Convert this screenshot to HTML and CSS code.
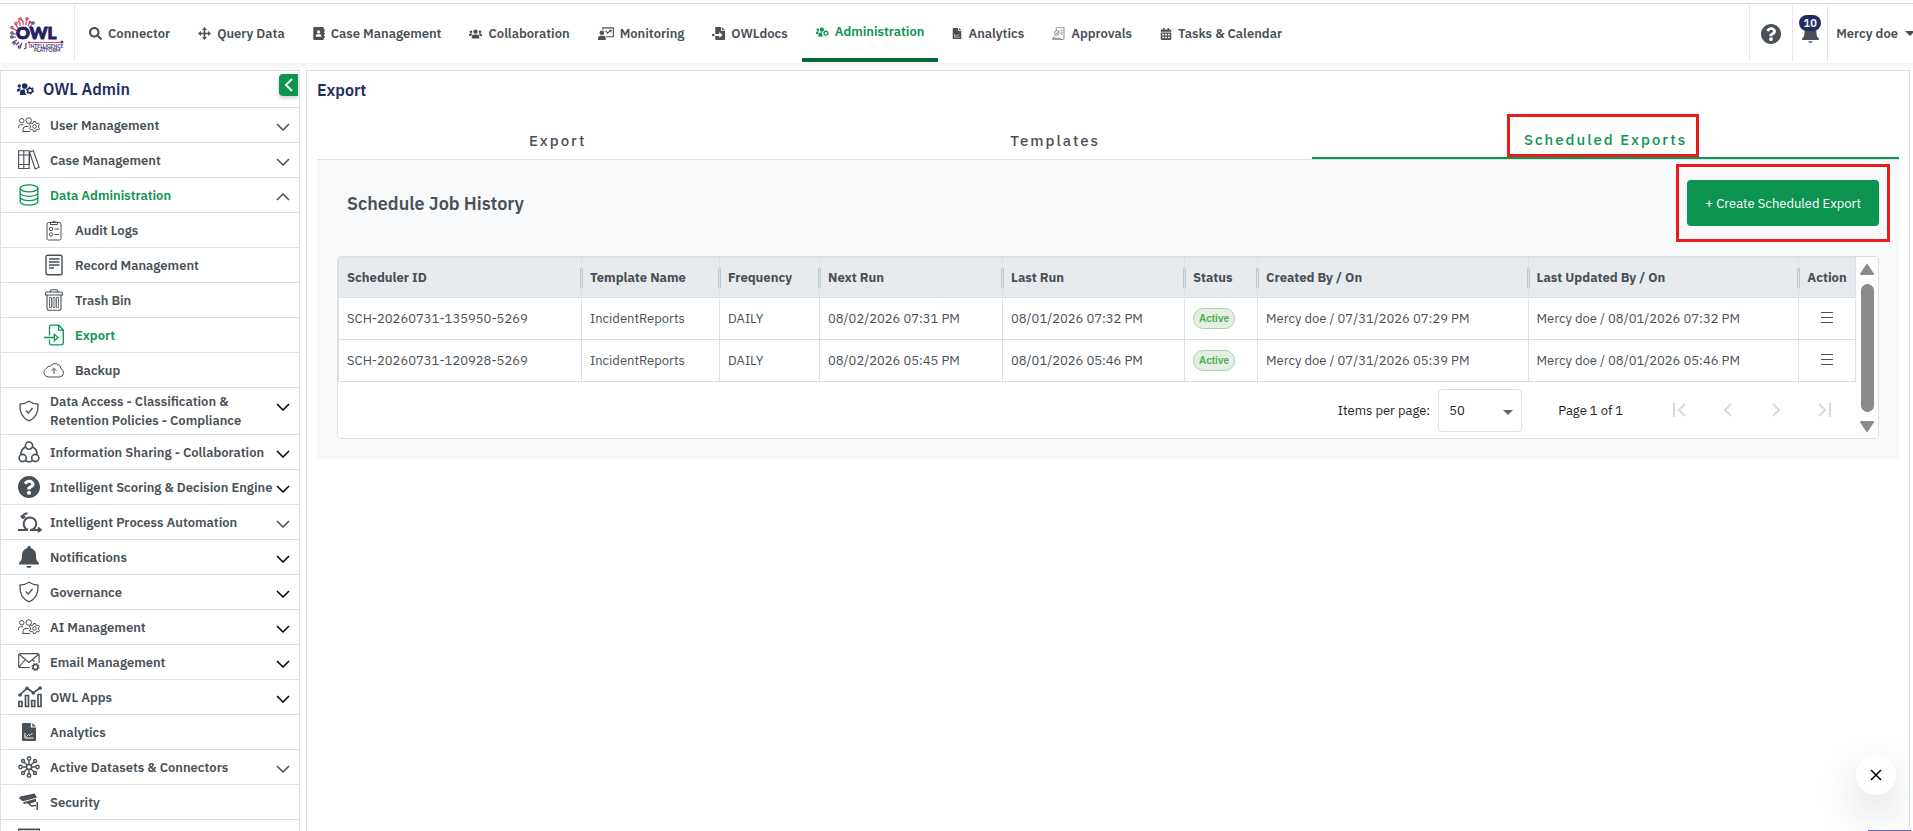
FILE: index.html
```html
<!DOCTYPE html>
<html lang="en">
<head>
	<meta charset="UTF-8">
	<title>OWL Admin - Export</title>
	<meta name="viewport" content="width=device-width,initial-scale=1">
	<link rel="stylesheet" href="styles.css">
</head>
<body>
	<svg class="sprite" aria-hidden="true">
		<symbol id="i-search" viewBox="0 0 512 512"><path fill="currentColor" d="M505 442.7L405.3 343c-4.5-4.5-10.6-7-17-7H372c27.6-35.3 44-79.7 44-128C416 93.1 322.9 0 208 0S0 93.1 0 208s93.1 208 208 208c48.3 0 92.7-16.4 128-44v16.3c0 6.4 2.5 12.5 7 17l99.7 99.7c9.4 9.4 24.6 9.4 33.9 0l28.3-28.3c9.4-9.4 9.4-24.6.1-34zM208 336c-70.7 0-128-57.2-128-128 0-70.7 57.2-128 128-128 70.7 0 128 57.2 128 128 0 70.7-57.2 128-128 128z"/></symbol>
		<symbol id="i-move" viewBox="0 0 16 16"><path fill="currentColor" d="M8 0l3 3.600H9V7h3.400V5L16 8l-3.600 3V9H9v3.400h2L8 16l-3-3.600h2V9H3.600v2L0 8l3.600-3v2H7V3.600H5z"/></symbol>
		<symbol id="i-book" viewBox="0 0 14 16"><path fill="currentColor" fill-rule="evenodd" d="M1.500 0h10A1.500 1.500 0 0 1 13 1.500V3h1v2.500h-1V7h1v2.500h-1V11h1v2.500h-1v1a1.500 1.500 0 0 1-1.500 1.500h-10A1.500 1.500 0 0 1 0 14.500v-13A1.500 1.500 0 0 1 1.500 0zM6.500 4a2 2 0 1 0 0 4 2 2 0 0 0 0-4zM3 12h7v-1c0-1.400-1.200-2.200-2.400-2.200H5.400C4.200 8.800 3 9.600 3 11z"/></symbol>
		<symbol id="i-users" viewBox="0 0 20 14"><g fill="currentColor"><circle cx="3" cy="3.500" r="2"/><circle cx="17" cy="3.500" r="2"/><circle cx="10" cy="3.500" r="3.300"/><path d="M0 10V8.500A2.300 2.300 0 0 1 2.300 6.300H4.500l.8.500A5 5 0 0 0 3.400 10zM20 10V8.500a2.300 2.300 0 0 0-2.300-2.200h-2.200l-.8.500a5 5 0 0 1 1.900 3.200zM4.200 14v-2.500A3.800 3.800 0 0 1 8 7.700h4a3.800 3.800 0 0 1 3.800 3.800V14z"/></g></symbol>
		<symbol id="i-users-cog" viewBox="0 0 20 14"><g fill="currentColor"><circle cx="2.700" cy="3.500" r="2"/><circle cx="9" cy="3.500" r="3.300"/><path d="M0 10V8.500a2.300 2.300 0 0 1 2.300-2.200h2l.5.500A5 5 0 0 0 3 10zM3.500 14v-2.500a3.800 3.800 0 0 1 3.800-3.800h2.200A6 6 0 0 0 11.500 14z"/></g><circle cx="15.300" cy="8.800" r="2.800" fill="none" stroke="currentColor" stroke-width="1.800"/><circle cx="15.300" cy="8.800" r="4" fill="none" stroke="currentColor" stroke-width="1.400" stroke-dasharray="2.100 2.090"/></symbol>
		<symbol id="i-teach" viewBox="0 0 20 16"><g fill="none" stroke="currentColor" stroke-width="1.400"><path d="M6 3V.9h13.200V12H10"/><path d="M9.500 4.500l2.500 3 2-2 2-1.500M14 4h2.300v2.300"/></g><g fill="currentColor"><circle cx="4.800" cy="7" r="2.900"/><path d="M0 16v-1.500a3.700 3.700 0 0 1 3.700-3.700H6a3.700 3.700 0 0 1 3.700 3.700V16z"/></g></symbol>
		<symbol id="i-import" viewBox="0 0 16 16"><path fill="currentColor" d="M4 0h7v4.500h5V15a1 1 0 0 1-1 1H5a1 1 0 0 1-1-1v-4h5v2.300l4-3.600-4-3.600v2.400H4zM12 0l4 3.500h-4zM0 8.500h3V11H0z"/></symbol>
		<symbol id="i-chart-file" viewBox="0 0 14 18"><path fill="currentColor" fill-rule="evenodd" d="M1 0h7.800v4.500H14V17a1 1 0 0 1-1 1H1a1 1 0 0 1-1-1V1a1 1 0 0 1 1-1zm9.300 0L14 3.400h-3.700z"/><path fill="none" stroke="#fff" d="M3 10v5h8.500M4.500 13.500l2-2 1.500 1 2.500-2.500"/></symbol>
		<symbol id="i-approve" viewBox="0 0 20 20"><g fill="none" stroke="currentColor"><path d="M6.500 5V2.500a2 2 0 0 1 2-2h10v16a3 3 0 0 1-3 3h-13a2 2 0 0 1-2-2h12.500a2 2 0 0 0 2 2M2 17l3-4"/><circle cx="7.500" cy="9" r="3.500"/><path d="M13 5h3.500M13 8h3.500M13 11h3.500M6 9l1.500 1.500L10 7"/></g></symbol>
		<symbol id="i-calendar" viewBox="0 0 14 16"><path fill="currentColor" fill-rule="evenodd" d="M3 0h2v2h4V0h2v2h1.500A1.500 1.500 0 0 1 14 3.500V5H0V3.500A1.500 1.500 0 0 1 1.500 2H3zM0 6h14v8.500a1.500 1.500 0 0 1-1.500 1.500h-11A1.500 1.500 0 0 1 0 14.500zm2 1.800V10h2.500V7.800zm3.800 0V10h2.400V7.800zm3.700 0V10H12V7.800zM2 11.600v2.200h2.500v-2.200zm3.800 0v2.200h2.400v-2.200zm3.700 0v2.200H12v-2.200z"/></symbol>
		<symbol id="i-help" viewBox="8 8 496 496"><path fill="currentColor" d="M504 256c0 136.997-111.043 248-248 248S8 392.997 8 256C8 119.083 119.043 8 256 8s248 111.083 248 248zM262.655 90c-54.497 0-89.255 22.957-116.549 63.758-3.536 5.286-2.353 12.415 2.715 16.258l34.699 26.310c5.205 3.947 12.621 3.008 16.665-2.122 17.864-22.658 30.113-35.797 57.303-35.797 20.429 0 45.698 13.148 45.698 32.958 0 14.976-12.363 22.667-32.534 33.976C247.128 238.528 216 254.941 216 296v4c0 6.627 5.373 12 12 12h56c6.627 0 12-5.373 12-12v-1.333c0-28.462 83.186-29.647 83.186-106.667 0-58.002-60.165-102-116.531-102zM256 338c-25.365 0-46 20.635-46 46 0 25.364 20.635 46 46 46s46-20.636 46-46c0-25.365-20.635-46-46-46z"/></symbol>
		<symbol id="i-bell" viewBox="0 0 20 22"><path fill="currentColor" d="M10 0a1.600 1.600 0 0 1 1.600 1.900C14.800 2.700 17 5.500 17 9c0 4.500.8 6 2.600 7.600.8.700.4 2-.7 2H1.100c-1.100 0-1.500-1.300-.7-2C2.200 15 3 13.500 3 9c0-3.500 2.200-6.300 5.400-7.100A1.600 1.600 0 0 1 10 0zM7.500 20h5a2.500 2 0 0 1-5 0z"/></symbol>
		<symbol id="i-people" viewBox="0 0 22 16"><g fill="none" stroke="currentColor"><circle cx="3.800" cy="3.700" r="2.200"/><circle cx="10.700" cy="3.500" r="2.800"/><path d="M.6 11V9.500A1.800 1.800 0 0 1 2.400 7.800h2.800M5 15v-2.600a3 3 0 0 1 3-3h2.500M5 14.500h7"/><circle cx="16.500" cy="9.500" r="1.800"/><path d="M15.500 4.500h2l.4 1.500 1.300.7 1.300-.6 1 1.700-1 1.100v1.300l1 1.100-1 1.700-1.300-.6-1.300.7-.4 1.400h-2l-.4-1.400-1.300-.7-1.300.6-1-1.700 1-1.100V8.900l-1-1.100 1-1.700 1.300.6 1.300-.7z"/></g></symbol>
		<symbol id="i-books" viewBox="0 0 22 20"><g fill="none" stroke="currentColor" stroke-width="1.100"><path d="M.6.8h10.500v17.700H.6zM5.800.8v17.700M.6 5h10.500M.6 14.500h10.500M11.500 2l3.800-1.200 5.900 16.400-4 1.800zM11.500 2v13"/></g></symbol>
		<symbol id="i-database" viewBox="0 0 20 22"><g fill="none" stroke="currentColor" stroke-width="1.300"><ellipse cx="10" cy="4.300" rx="8.900" ry="3.500"/><path d="M1.100 4.300v13.200c0 2 4 3.600 8.900 3.600s8.900-1.600 8.900-3.600V4.300M1.100 8.700c0 2 4 3.600 8.900 3.600s8.900-1.600 8.900-3.600M1.100 13.100c0 2 4 3.600 8.900 3.600s8.900-1.600 8.900-3.600"/></g></symbol>
		<symbol id="i-clipboard" viewBox="0 0 16 22"><g fill="none" stroke="currentColor"><rect x="1" y="3.500" width="14" height="17.500" rx="1.500"/><path d="M4.500 5.500V3.300h1.800a1.800 1.800 0 0 1 3.400 0h1.800v2.200zM8.500 10h4.500M8.500 15.500h4.500"/><circle cx="5" cy="10" r="1.700"/><circle cx="5" cy="15.500" r="1.700"/></g></symbol>
		<symbol id="i-doc" viewBox="0 0 18 22"><g fill="none" stroke="currentColor" stroke-width="1.400"><rect x="1" y="1.200" width="16" height="19.600" rx="1.500"/><path d="M4 5h10.500M4 8h10.500M4 11h10.500M4 14h5"/></g></symbol>
		<symbol id="i-trash" viewBox="0 0 18 22"><g fill="none" stroke="currentColor" stroke-width="1.100"><path d="M5.500 3V1.700a1 1 0 0 1 1-1h5a1 1 0 0 1 1 1V3M.6 6V4.200A1.200 1.200 0 0 1 1.800 3h14.400a1.200 1.200 0 0 1 1.200 1.200V6zM2 6v13.500a1.700 1.700 0 0 0 1.700 1.700h10.600a1.700 1.700 0 0 0 1.700-1.700V6"/><path stroke-width=".8" d="M4.500 8.500h2v10h-2zM8 8.500h2v10H8zM11.500 8.500h2v10h-2z"/></g></symbol>
		<symbol id="i-export" viewBox="0 0 20 22"><g fill="none" stroke="currentColor" stroke-width="1.300"><path d="M5.500 11.500V3A1.800 1.800 0 0 1 7.300 1.200h7.500L19.300 6v13a1.800 1.800 0 0 1-1.800 1.800H7.300A1.800 1.800 0 0 1 5.500 19v-3.500M14.500 1.500v4.700h4.700M0 13.500h10"/><path d="M10.300 10.200l3.700 3.300-3.700 3.300z"/></g></symbol>
		<symbol id="i-cloud" viewBox="0 0 22 16"><g fill="none" stroke="currentColor"><path d="M5.500 15a4.500 4.500 0 0 1-1.800-8.600A3.300 3.300 0 0 1 7.500 4 5.800 5.800 0 0 1 18 6.800a4.300 4.300 0 0 1-1.500 8.200zM11 12V6.500M8.500 8.800L11 6.300l2.500 2.500"/></g></symbol>
		<symbol id="i-shield" viewBox="0 0 20 22"><g fill="none" stroke="currentColor" stroke-width="1.300"><path d="M10 1.200c2.500 1.600 5.500 2.600 9 2.900.5 8.100-2.500 14.100-9 16.800C3.500 18.200.5 12.200 1 4.100c3.500-.3 6.500-1.300 9-2.900z"/><path d="M6.800 10.500l2.500 2.500 4.200-5"/></g></symbol>
		<symbol id="i-share" viewBox="0 0 22 22"><g fill="none" stroke="currentColor" stroke-width="1.600"><circle cx="11" cy="4.600" r="3.600"/><circle cx="4.700" cy="17" r="3.600"/><circle cx="17.300" cy="17" r="3.600"/><path d="M7.300 6C4.500 7.500 3 10 3 13.200M14.700 6c2.800 1.500 4.300 4 4.300 7.200M7.500 19.800c2.200 1.300 4.800 1.300 7 0"/></g></symbol>
		<symbol id="i-process" viewBox="0 0 24 20"><g fill="none" stroke="currentColor" stroke-width="2"><path d="M0 18h10M13 18a6.300 6.300 0 1 0-7.300-6.300c0 2.800 1.800 5.300 4.300 6.300M4.800 6C4.500 3 6.500 1.200 9.500 1.500M12 18h11M2.800 3.500L4.800 6l2.700-1.300M20 15.500l2.800 2.500-2.800 2"/></g></symbol>
		<symbol id="i-mail" viewBox="0 0 22 18"><g fill="none" stroke="currentColor" stroke-width="1.200"><path d="M12 14.500H2A1.300 1.300 0 0 1 .7 13.200V2A1.300 1.300 0 0 1 2 .7h17.800A1.300 1.300 0 0 1 21.100 2v8M1.200 1.200L11 9.500l9.700-8.300M1.200 14l6-7.500M14.500 6.500l2 2.200"/><circle cx="17.500" cy="14" r="2.400" stroke-width="1.500"/><circle cx="17.500" cy="14" r="3.400" stroke-dasharray="1.500 1.170"/></g></symbol>
		<symbol id="i-apps" viewBox="0 0 24 22"><g fill="none" stroke="currentColor" stroke-width="1.700"><path d="M1 15.500h3v5H1zM7.500 9.500h3v11h-3zM13.700 14.500h3v6h-3zM20 8.500h3v12h-3z"/><path d="M2 9l7-6.800 6.300 4.500L22 2"/></g><g fill="currentColor"><circle cx="2" cy="9" r="1.800"/><circle cx="9" cy="2.200" r="1.800"/><circle cx="15.300" cy="7" r="1.800"/><circle cx="22.200" cy="2" r="1.800"/></g></symbol>
		<symbol id="i-hub" viewBox="0 0 22 22"><g fill="none" stroke="currentColor" stroke-width="1.400"><circle cx="11" cy="11" r="2.500"/><circle cx="11" cy="2.500" r="1.700"/><circle cx="11" cy="19.500" r="1.700"/><circle cx="2.500" cy="11" r="1.700"/><circle cx="19.500" cy="11" r="1.700"/><circle cx="5" cy="5" r="1.500"/><circle cx="17" cy="5" r="1.500"/><circle cx="5" cy="17" r="1.500"/><circle cx="17" cy="17" r="1.500"/><path d="M11 4.200v4.300M11 13.500v4.300M4.200 11h4.300M13.500 11h4.300M6 6l3.200 3.200M16 6l-3.200 3.200M6 16l3.200-3.200M16 16l-3.200-3.200"/></g></symbol>
		<symbol id="i-camera" viewBox="0 0 20 18"><g fill="currentColor"><path d="M1 3.500L15.500.5l2.500 4-14 3.800L0 5.500zM4 9.200l13-3.500v3L9.500 11l-2-.8-2.500.8z"/></g><path fill="none" stroke="currentColor" stroke-width="1.600" d="M10 10.500l2.500 2.500 4.500-.5M18.300 9v8"/></symbol>
		<symbol id="i-down" viewBox="0 0 14 8"><path fill="none" stroke="currentColor" stroke-width="1.500" d="M1 1l6 6 6-6"/></symbol>
		<symbol id="i-up" viewBox="0 0 14 8"><path fill="none" stroke="currentColor" stroke-width="1.500" d="M1 7l6-6 6 6"/></symbol>
	</svg>

	<header class="topbar">
		<a class="brand" href="#" aria-label="OWL Intelligence Platform">
			<svg viewBox="0 0 54 36" width="54" height="36">
				<g fill="none" stroke="#c93d5e" stroke-width="1.200">
					<path d="M7 14L4 12H2M8 11L6 8M10 9V6L8 4M13 8V4l-2-2M16 8V5l1-3M18 9l2-4M20 10l3-4"/>
					<circle cx="10" cy="2" r="1.200"/><circle cx="17" cy="1.800" r="1.200"/><circle cx="20" cy="5" r="1"/><circle cx="6" cy="6.500" r="1.200"/><circle cx="2" cy="10.500" r="1.200"/>
				</g>
				<g fill="none" stroke="#4f3d80" stroke-width="1.200">
					<path d="M6 17H3M6 20H2M7 23l-4 2M9 25l-3 3M12 26l-2 4M16 26v5l-2 1"/>
					<circle cx="2" cy="16" r="1.200"/><circle cx="1.800" cy="20" r="1.200"/><circle cx="4" cy="26" r="1.200"/><circle cx="9.500" cy="30" r="1.200"/><circle cx="23" cy="6" r="1.200"/>
				</g>
				<text class="brand-name" x="6" y="22">OWL</text>
				<path d="M19 25.500h33" stroke="#c4506c" stroke-width="1.200"/>
				<circle cx="19" cy="25.500" r="1.300" fill="#c4506c"/><circle cx="52" cy="25" r="1.500" fill="#4f3d80"/>
				<text class="brand-tag" x="19" y="31">INTELLIGENCE</text>
				<text class="brand-tag" x="24" y="35">PLATFORM</text>
			</svg>
		</a>
		<nav class="menu">
			<a href="#"><svg width="13" height="13"><use href="#i-search"/></svg>Connector</a>
			<a href="#"><svg width="13" height="13"><use href="#i-move"/></svg>Query Data</a>
			<a href="#"><svg width="12" height="13"><use href="#i-book"/></svg>Case Management</a>
			<a href="#"><svg width="13" height="10"><use href="#i-users"/></svg>Collaboration</a>
			<a href="#"><svg width="16" height="13"><use href="#i-teach"/></svg>Monitoring</a>
			<a href="#"><svg width="13" height="13"><use href="#i-import"/></svg>OWLdocs</a>
			<a href="#" class="active"><svg width="13" height="10"><use href="#i-users-cog"/></svg>Administration</a>
			<a href="#"><svg width="10" height="11"><use href="#i-chart-file"/></svg>Analytics</a>
			<a href="#"><svg width="13" height="13"><use href="#i-approve"/></svg>Approvals</a>
			<a href="#"><svg width="12" height="12"><use href="#i-calendar"/></svg>Tasks &amp; Calendar</a>
		</nav>
		<div class="tools">
			<button class="tool help" aria-label="Help"><svg width="20" height="20"><use href="#i-help"/></svg></button>
			<button class="tool bell" aria-label="Notifications"><svg width="17" height="23"><use href="#i-bell"/></svg><span class="badge">10</span></button>
			<button class="tool user">Mercy doe<span class="caret"></span></button>
		</div>
	</header>

	<div class="layout">
		<aside class="sidebar">
			<div class="side-title">
				<svg width="17" height="12"><use href="#i-users-cog"/></svg>
				<h2>OWL Admin</h2>
				<button class="collapse" aria-label="Collapse menu"><svg width="9" height="14" viewBox="0 0 9 14"><path fill="none" stroke="#fff" stroke-width="2" d="M8 1L2 7l6 6"/></svg></button>
			</div>
			<ul>
				<li><a href="#"><svg class="icon"><use href="#i-people"/></svg><span>User Management</span><svg class="chev"><use href="#i-down"/></svg></a></li>
				<li><a href="#"><svg class="icon"><use href="#i-books"/></svg><span>Case Management</span><svg class="chev"><use href="#i-down"/></svg></a></li>
				<li><a href="#" class="active"><svg class="icon"><use href="#i-database"/></svg><span>Data Administration</span><svg class="chev"><use href="#i-up"/></svg></a></li>
				<li class="sub"><a href="#"><svg class="icon"><use href="#i-clipboard"/></svg><span>Audit Logs</span></a></li>
				<li class="sub"><a href="#"><svg class="icon"><use href="#i-doc"/></svg><span>Record Management</span></a></li>
				<li class="sub"><a href="#"><svg class="icon"><use href="#i-trash"/></svg><span>Trash Bin</span></a></li>
				<li class="sub"><a href="#" class="active"><svg class="icon"><use href="#i-export"/></svg><span>Export</span></a></li>
				<li class="sub"><a href="#"><svg class="icon"><use href="#i-cloud"/></svg><span>Backup</span></a></li>
				<li class="two-line"><a href="#"><svg class="icon"><use href="#i-shield"/></svg><span>Data Access - Classification &amp; Retention Policies - Compliance</span><svg class="chev dark"><use href="#i-down"/></svg></a></li>
				<li><a href="#"><svg class="icon"><use href="#i-share"/></svg><span>Information Sharing - Collaboration</span><svg class="chev dark"><use href="#i-down"/></svg></a></li>
				<li><a href="#"><svg class="icon"><use href="#i-help"/></svg><span>Intelligent Scoring &amp; Decision Engine</span><svg class="chev dark"><use href="#i-down"/></svg></a></li>
				<li><a href="#"><svg class="icon wide"><use href="#i-process"/></svg><span>Intelligent Process Automation</span><svg class="chev"><use href="#i-down"/></svg></a></li>
				<li><a href="#"><svg class="icon"><use href="#i-bell"/></svg><span>Notifications</span><svg class="chev dark"><use href="#i-down"/></svg></a></li>
				<li><a href="#"><svg class="icon"><use href="#i-shield"/></svg><span>Governance</span><svg class="chev dark"><use href="#i-down"/></svg></a></li>
				<li><a href="#"><svg class="icon"><use href="#i-people"/></svg><span>AI Management</span><svg class="chev dark"><use href="#i-down"/></svg></a></li>
				<li><a href="#"><svg class="icon"><use href="#i-mail"/></svg><span>Email Management</span><svg class="chev dark"><use href="#i-down"/></svg></a></li>
				<li><a href="#"><svg class="icon wide"><use href="#i-apps"/></svg><span>OWL Apps</span><svg class="chev dark"><use href="#i-down"/></svg></a></li>
				<li><a href="#"><svg class="icon small"><use href="#i-chart-file"/></svg><span>Analytics</span></a></li>
				<li><a href="#"><svg class="icon"><use href="#i-hub"/></svg><span>Active Datasets &amp; Connectors</span><svg class="chev"><use href="#i-down"/></svg></a></li>
				<li><a href="#"><svg class="icon small"><use href="#i-camera"/></svg><span>Security</span></a></li>
				<li><a href="#" aria-label="Reports"><svg class="icon small" viewBox="0 0 18 14"><path fill="none" stroke="currentColor" stroke-width="1.500" d="M0 .8h18v12.400H0z"/></svg></a></li>
			</ul>
		</aside>

		<main class="panel">
			<h1>Export</h1>
			<div class="tabs" role="tablist">
				<button class="tab" role="tab">Export</button>
				<button class="tab" role="tab">Templates</button>
				<button class="tab active" role="tab" aria-selected="true"><span class="marked marked-tab">Scheduled Exports</span></button>
			</div>
			<section class="jobs">
				<div class="jobs-head">
					<h3>Schedule Job History</h3>
					<div class="marked marked-btn"><button class="create">+ Create Scheduled Export</button></div>
				</div>
				<div class="grid-box">
					<div class="grid-main">
						<table>
							<thead>
								<tr>
									<th class="c-id">Scheduler ID</th>
									<th class="c-name">Template Name</th>
									<th class="c-freq">Frequency</th>
									<th class="c-run">Next Run</th>
									<th class="c-last">Last Run</th>
									<th class="c-status">Status</th>
									<th>Created By / On</th>
									<th>Last Updated By / On</th>
									<th class="c-action">Action</th>
								</tr>
							</thead>
							<tbody>
								<tr>
									<td>SCH-20260731-135950-5269</td>
									<td>IncidentReports</td>
									<td>DAILY</td>
									<td>08/02/2026 07:31 PM</td>
									<td>08/01/2026 07:32 PM</td>
									<td><span class="pill">Active</span></td>
									<td>Mercy doe / 07/31/2026 07:29 PM</td>
									<td>Mercy doe / 08/01/2026 07:32 PM</td>
									<td class="c-action"><button class="burger" aria-label="Row actions"><i></i><i></i><i></i></button></td>
								</tr>
								<tr>
									<td>SCH-20260731-120928-5269</td>
									<td>IncidentReports</td>
									<td>DAILY</td>
									<td>08/02/2026 05:45 PM</td>
									<td>08/01/2026 05:46 PM</td>
									<td><span class="pill">Active</span></td>
									<td>Mercy doe / 07/31/2026 05:39 PM</td>
									<td>Mercy doe / 08/01/2026 05:46 PM</td>
									<td class="c-action"><button class="burger" aria-label="Row actions"><i></i><i></i><i></i></button></td>
								</tr>
							</tbody>
						</table>
						<div class="pager">
							<label for="page-size">Items per page:</label>
							<div class="select">
								<select id="page-size"><option>50</option></select>
							</div>
							<span class="range">Page 1 of 1</span>
							<div class="pager-btns">
								<button disabled aria-label="First page"><svg viewBox="0 0 14 14"><path d="M1 0v14M12 1L6 7l6 6"/></svg></button>
								<button disabled aria-label="Previous page"><svg viewBox="0 0 14 14"><path d="M10 1L4 7l6 6"/></svg></button>
								<button disabled aria-label="Next page"><svg viewBox="0 0 14 14"><path d="M4 1l6 6-6 6"/></svg></button>
								<button disabled aria-label="Last page"><svg viewBox="0 0 14 14"><path d="M2 1l6 6-6 6M13 0v14"/></svg></button>
							</div>
						</div>
					</div>
					<div class="scrollbar" aria-hidden="true">
						<svg width="14" height="11" viewBox="0 0 14 11"><path d="M7 1l6 9H1z"/></svg>
						<span class="thumb"></span>
						<svg width="14" height="11" viewBox="0 0 14 11"><path d="M7 10L1 1h12z"/></svg>
					</div>
				</div>
			</section>
		</main>
	</div>

	<button class="fab" aria-label="Close"><svg width="12" height="12" viewBox="0 0 12 12"><path stroke="#000" stroke-width="1.500" d="M1 1l10 10M11 1L1 11"/></svg></button>
	<div class="chat-edge"></div>
</body>
</html>
```
FILE: styles.css
```css
*, *::after {
	box-sizing: border-box;
}
body {
	margin: 0;
	height: 100vh;
	padding-top: 3px;
	display: flex;
	flex-direction: column;
	overflow: hidden;
	background: #fff;
	color: #495057;
	font-family: "IBM Plex Sans", Roboto, "Noto Sans", sans-serif;
	font-size: 13px;
}
a {
	color: inherit;
	text-decoration: none;
}
button, select {
	font: inherit;
	color: inherit;
	background: none;
	border: 0;
	padding: 0;
}
h1, h2, h3, ul {
	margin: 0;
	padding: 0;
}
svg {
	flex: none;
}
.sprite {
	position: absolute;
	width: 0;
	height: 0;
}

/* top bar */
.topbar {
	flex: none;
	display: flex;
	height: 60px;
	padding: 1px 0;
	border-top: 1px solid #dee0e6;
	box-shadow: 0 4px 6px rgba(60, 20, 40, .05);
	font-weight: 600;
}
.brand {
	width: 75px;
	padding: 12px 0 0 10px;
	border-right: 1px solid #e4e6ea;
}
.brand-name {
	font: 900 17px Lato, sans-serif;
	fill: #262262;
	stroke: #262262;
}
.brand-tag {
	font: 700 5px Lato, sans-serif;
	fill: #3b3570;
}
.menu {
	display: flex;
	flex: 1;
}
.menu a {
	display: flex;
	align-items: center;
	gap: 6px;
	padding: 0 14px;
	white-space: nowrap;
}
.menu a.active {
	color: #0d9450;
	border-bottom: 4px solid #066839;
}
.tools {
	display: flex;
	margin-right: -2px;
}
.tool {
	display: flex;
	align-items: center;
	justify-content: center;
	border-left: 1px solid #e4e6ea;
	font-weight: 600;
}
.help {
	width: 43px;
}
.bell {
	position: relative;
	width: 35px;
}
.badge {
	position: absolute;
	top: 10px;
	left: 6px;
	width: 22px;
	border-radius: 8px;
	background: #1f2d62;
	color: #fff;
	font-size: 11px;
	line-height: 16px;
}
.user {
	gap: 7px;
	padding-left: 8px;
	white-space: nowrap;
}
.caret {
	border: 5px solid transparent;
	border-top-color: #495057;
	border-bottom: 0;
}

/* page columns */
.layout {
	flex: 1;
	min-height: 0;
	display: flex;
	gap: 6px;
	padding: 7px 3px 0 0;
}
.sidebar {
	flex: none;
	width: 300px;
	border: 1px solid #dcdfe6;
	border-bottom: 0;
	overflow: hidden;
}
.side-title {
	display: flex;
	align-items: center;
	height: 37px;
	padding-left: 16px;
	gap: 9px;
	border-bottom: 1px solid #dcdfe6;
	color: #1f2d62;
}
h1, h2 {
	font-size: 16px;
	font-weight: 600;
	color: #1f2d62;
}
.collapse {
	align-self: flex-start;
	display: flex;
	align-items: center;
	justify-content: center;
	width: 19px;
	height: 22px;
	margin: 3px 1px 0 auto;
	border-radius: 4px 0 0 4px;
	background: #0d9450;
	box-shadow: 0 2px 4px rgba(0, 0, 0, .2);
}
.sidebar ul {
	list-style: none;
}
.sidebar li a {
	display: flex;
	align-items: center;
	gap: 10px;
	min-height: 35px;
	padding: 4px 9px 4px 17px;
	border-bottom: 1px solid #dcdfe6;
	font-weight: 600;
	line-height: 19px;
}
.sidebar .sub a {
	padding-left: 42px;
}
.sidebar li a.active {
	color: #0d9450;
}
.icon {
	width: 22px;
	height: 22px;
}
.icon.wide {
	width: 24px;
	margin-right: -2px;
}
.icon.small {
	height: 18px;
}
.sidebar span {
	flex: 1;
	white-space: nowrap;
}
.sidebar .two-line span {
	white-space: normal;
}
.chev {
	align-self: flex-start;
	width: 14px;
	height: 8px;
	margin: 11px 0 0 -10px;
	color: #495057;
}
.chev.dark {
	color: #000;
}

/* export panel */
.panel {
	flex: 1;
	min-width: 0;
	padding: 0 10px;
	border: 1px solid #dcdfe6;
	border-bottom: 0;
}
.panel h1 {
	line-height: 38px;
	margin-bottom: 10px;
}
.tabs {
	display: flex;
	border-bottom: 1px solid #dcdfe6;
}
.tab {
	flex: 1 1 auto;
	height: 40px;
	padding-top: 2px;
	font-size: 15px;
	font-weight: 500;
	letter-spacing: 2px;
}
.tab.active {
	color: #0d9450;
	border-bottom: 2px solid #0d9450;
}
/* review frames drawn round the tab and the button */
.marked {
	position: relative;
	display: inline-block;
}
.marked::after {
	content: "";
	position: absolute;
	border: 3px solid #e71d1d;
	pointer-events: none;
}
.marked-tab::after {
	inset: -16px -12px -8px -17px;
}
.marked-btn::after {
	inset: -16px -11px;
}
.jobs {
	padding: 20px;
	background: #f8f9fb;
}
.jobs-head {
	display: flex;
	justify-content: space-between;
	align-items: center;
	margin-bottom: 30px;
	padding-left: 10px;
}
h3 {
	font-size: 18px;
	font-weight: 600;
}
.create {
	display: block;
	height: 46px;
	padding: 0 18px;
	border-radius: 4px;
	background: #0d9450;
	color: #fff;
	font-weight: 400;
}
.grid-box {
	display: flex;
	border: 1px solid #dcdfe6;
	border-radius: 4px;
	background: #fff;
}
.grid-main {
	flex: 1;
	min-width: 0;
}
table {
	width: 100%;
	table-layout: fixed;
	border-spacing: 0;
	border: solid #dcdfe3;
	border-width: 1px 0 0 1px;
}
th, td {
	padding: 0 8px;
	border: solid #dcdfe3;
	border-width: 0 1px 1px 0;
	text-align: left;
	white-space: nowrap;
}
th {
	position: relative;
	height: 40px;
	background: #e7ebee;
	font-weight: 700;
}
td {
	height: 42px;
}
/* column resize grips */
th:not(:last-child)::after {
	content: "";
	position: absolute;
	z-index: 1;
	top: 10px;
	right: -2px;
	width: 3px;
	height: 20px;
	border: solid #b7ccd8;
	border-width: 0 1px;
}
.c-id {
	width: 243px;
}
.c-name {
	width: 138px;
}
.c-freq {
	width: 100px;
}
.c-run {
	width: 183px;
}
.c-last {
	width: 182px;
}
.c-status {
	width: 73px;
}
.c-action {
	width: 57px;
	text-align: center;
}
.pill {
	display: inline-block;
	padding: 0 5px;
	border: 1px solid #a5d6a7;
	border-radius: 10px;
	background: #e4eee5;
	color: #4caf50;
	font: 700 10px/19px "Liberation Sans", Arial, sans-serif;
}
.burger {
	display: inline-flex;
	flex-direction: column;
	gap: 4px;
	width: 12px;
	padding-bottom: 4px;
	vertical-align: middle;
}
.burger i {
	height: 1px;
	background: #495057;
}
.pager {
	display: flex;
	align-items: center;
	justify-content: flex-end;
	height: 56px;
	padding-right: 12px;
	color: #212529;
}
.select {
	position: relative;
	margin: 0 36px 0 8px;
}
.select::after {
	content: "";
	position: absolute;
	top: 21px;
	right: 9px;
	border: 5px solid transparent;
	border-top-color: #666;
	border-bottom: 0;
	pointer-events: none;
}
.select select {
	display: block;
	width: 84px;
	height: 43px;
	padding-left: 10px;
	border: 1px solid #dcdfe6;
	border-radius: 4px;
	background: #fff;
	appearance: none;
}
.pager-btns {
	display: flex;
	gap: 8px;
	margin-left: 37px;
}
.pager-btns button {
	display: flex;
	align-items: center;
	justify-content: center;
	width: 40px;
	height: 40px;
}
.pager-btns svg {
	width: 14px;
	height: 14px;
	fill: none;
	stroke: #d9d9d9;
	stroke-width: 2;
}
.scrollbar {
	display: flex;
	flex-direction: column;
	align-items: center;
	gap: 9px;
	width: 22px;
	padding: 7px 0 6px;
	background: #fcfcfc;
}
.scrollbar path {
	fill: #8b8b8b;
	stroke: #8b8b8b;
	stroke-width: 2;
	stroke-linejoin: round;
}
.thumb {
	flex: 1;
	width: 13px;
	border-radius: 7px;
	background: #8b8b8b;
}

/* floating close button */
.fab {
	position: fixed;
	right: 17px;
	bottom: 36px;
	display: flex;
	align-items: center;
	justify-content: center;
	width: 40px;
	height: 40px;
	border-radius: 50%;
	background: #fff;
	box-shadow: 0 18px 40px rgba(20, 50, 70, .2);
}
.chat-edge {
	position: fixed;
	right: 2px;
	bottom: 0;
	width: 43px;
	height: 1px;
	background: #6c63b5;
}
```
